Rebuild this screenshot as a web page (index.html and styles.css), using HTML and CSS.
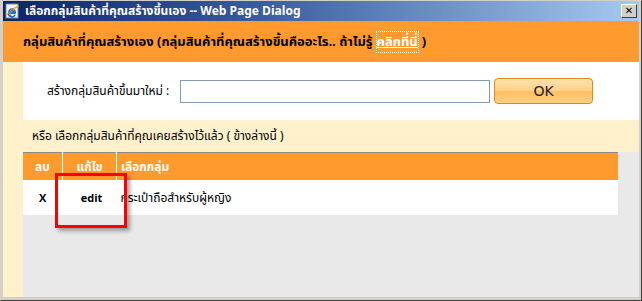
FILE: index.html
```html
<!DOCTYPE html>
<html lang="th">
<head>
  <meta charset="UTF-8">
  <title>เลือกกลุ่มสินค้าที่คุณสร้างขึ้นเอง -- Web Page Dialog</title>
  <link rel="stylesheet" href="styles.css">
</head>
<body>
  <div class="window">
    <!-- Barra del titolo -->
    <div class="titlebar">
      <svg class="ie-icon" width="16" height="16" viewBox="0 0 16 16">
        <rect x="1" y="1" width="12" height="14" fill="#f4f4f4" stroke="#8a8a8a"/>
        <path d="M3 9.5a4 4 0 1 1 7.6 1.5H5.2a2.2 2.2 0 0 0 4.2.6h1.4A3.8 3.8 0 0 1 3 9.5z" fill="#1d6fd6"/>
        <path d="M2 12c3-5 8-8 12-9-2 2-4 1-10 9" fill="none" stroke="#e8a21a" stroke-width="1"/>
      </svg>
      <span class="title-text">เลือกกลุ่มสินค้าที่คุณสร้างขึ้นเอง -- Web Page Dialog</span>
      <span class="close-btn">&#10005;</span>
    </div>

    <!-- Intestazione arancione -->
    <div class="page-head">
      กลุ่มสินค้าที่คุณสร้างเอง (กลุ่มสินค้าที่คุณสร้างขึ้นคืออะไร.. ถ้าไม่รู้ <a href="#" class="help-link">คลิกที่นี่</a> )
    </div>

    <div class="page-body">
      <div class="create-box">
        <label for="group-name">สร้างกลุ่มสินค้าขึ้นมาใหม่ :</label>
        <input type="text" id="group-name">
        <button type="button" class="ok-btn">OK</button>
      </div>

      <p class="hint">หรือ เลือกกลุ่มสินค้าที่คุณเคยสร้างไว้แล้ว ( ข้างล่างนี้ )</p>

      <div class="list-area">
        <table class="group-table">
          <thead>
            <tr>
              <th class="col-del">ลบ</th>
              <th class="col-edit">แก้ไข</th>
              <th>เลือกกลุ่ม</th>
            </tr>
          </thead>
          <tbody>
            <tr>
              <td class="col-del"><b>X</b></td>
              <td class="col-edit"><b>edit</b></td>
              <td>กระเป๋าถือสำหรับผู้หญิง</td>
            </tr>
          </tbody>
        </table>
        <!-- evidenziazione -->
        <div class="mark"></div>
      </div>
    </div>
  </div>
</body>
</html>
```

FILE: styles.css
```css
/* Finestra */
html, body {
  margin: 0;
  padding: 0;
}

body {
  font-family: Tahoma, "Noto Sans Thai", "Noto Sans", "DejaVu Sans", sans-serif;
  font-size: 12px;
  color: #000;
}

.window {
  width: 642px;
  height: 301px;
  box-sizing: border-box;
  display: flex;
  flex-direction: column;
  background: #d4d0c8;
  border-left: 1px solid #d4d0c8;
  border-top: 1px solid #d4d0c8;
  border-right: 1px solid #404040;
  border-bottom: 1px solid #404040;
  padding: 0 2px 3px 2px;
  overflow: hidden;
}

/* Barra del titolo */
.titlebar {
  height: 20px;
  flex: none;
  display: flex;
  align-items: center;
  gap: 4px;
  padding: 0 2px 0 2px;
  background: linear-gradient(to right, #0a246a 0%, #3a5c9c 40%, #a6caf0 100%);
  color: #fff;
  font-weight: bold;
  font-size: 12px;
}

.ie-icon {
  flex: none;
}

.title-text {
  flex: 1;
  white-space: nowrap;
}

.close-btn {
  width: 16px;
  height: 14px;
  box-sizing: border-box;
  background: #d4d0c8;
  border: 1px solid;
  border-color: #fff #404040 #404040 #fff;
  color: #000;
  font-size: 10px;
  line-height: 12px;
  text-align: center;
}

/* Intestazione */
.page-head {
  flex: none;
  height: 41px;
  box-sizing: border-box;
  padding: 0 20px;
  display: flex;
  align-items: center;
  background: #ff9a2e;
  font-weight: bold;
  font-size: 13px;
  white-space: nowrap;
}

.help-link {
  color: #fff;
  text-decoration: underline;
  outline: 1px dotted #fff;
  margin: 0 4px;
}

/* Corpo */
.page-body {
  flex: 1;
  background: #fff1cc;
  padding-left: 20px;
  display: flex;
  flex-direction: column;
}

.create-box {
  height: 58px;
  background: #fff;
  display: flex;
  align-items: center;
  padding-left: 24px;
  box-sizing: border-box;
}

.create-box label {
  width: 133px;
  flex: none;
}

.create-box input {
  width: 310px;
  height: 23px;
  box-sizing: border-box;
  border: 1px solid #7f9db9;
  margin: 0 4px 0 0;
  padding: 0 3px;
}

.ok-btn {
  width: 99px;
  height: 26px;
  border: 1px solid #d98c1c;
  border-radius: 4px;
  background: linear-gradient(to bottom, #ffe2ad 0%, #ffd08a 50%, #ffc061 52%, #ffcf84 100%);
  font-family: "DejaVu Sans", sans-serif;
  font-size: 14px;
  color: #222;
  cursor: pointer;
}

.hint {
  margin: 0;
  height: 32px;
  line-height: 32px;
  padding-left: 9px;
  white-space: nowrap;
}

/* Tabella */
.list-area {
  flex: 1;
  background: #e9e9e9;
  position: relative;
}

.group-table {
  width: 595px;
  border-collapse: collapse;
  border-top: 1px solid #8a8a8a;
}

.group-table th {
  background: #ff9a2e;
  color: #fff;
  font-weight: bold;
  text-align: left;
  height: 27px;
  padding: 0 4px;
  border-left: 1px solid #fff;
}

.group-table th:first-child {
  border-left: none;
}

.group-table td {
  background: #fff;
  height: 35px;
  padding: 0 4px;
}

.group-table td b {
  font-size: 11px;
}

.group-table .col-del {
  width: 31px;
  text-align: center;
}

.group-table .col-edit {
  width: 45px;
  text-align: center;
}

.group-table td.col-edit {
  padding-right: 0;
}

/* Riquadro rosso */
.mark {
  position: absolute;
  left: 32px;
  top: 21px;
  width: 66px;
  height: 49px;
  border: 3px solid #f00;
  box-shadow: 3px 3px 4px rgba(0, 0, 0, 0.35);
}
```
